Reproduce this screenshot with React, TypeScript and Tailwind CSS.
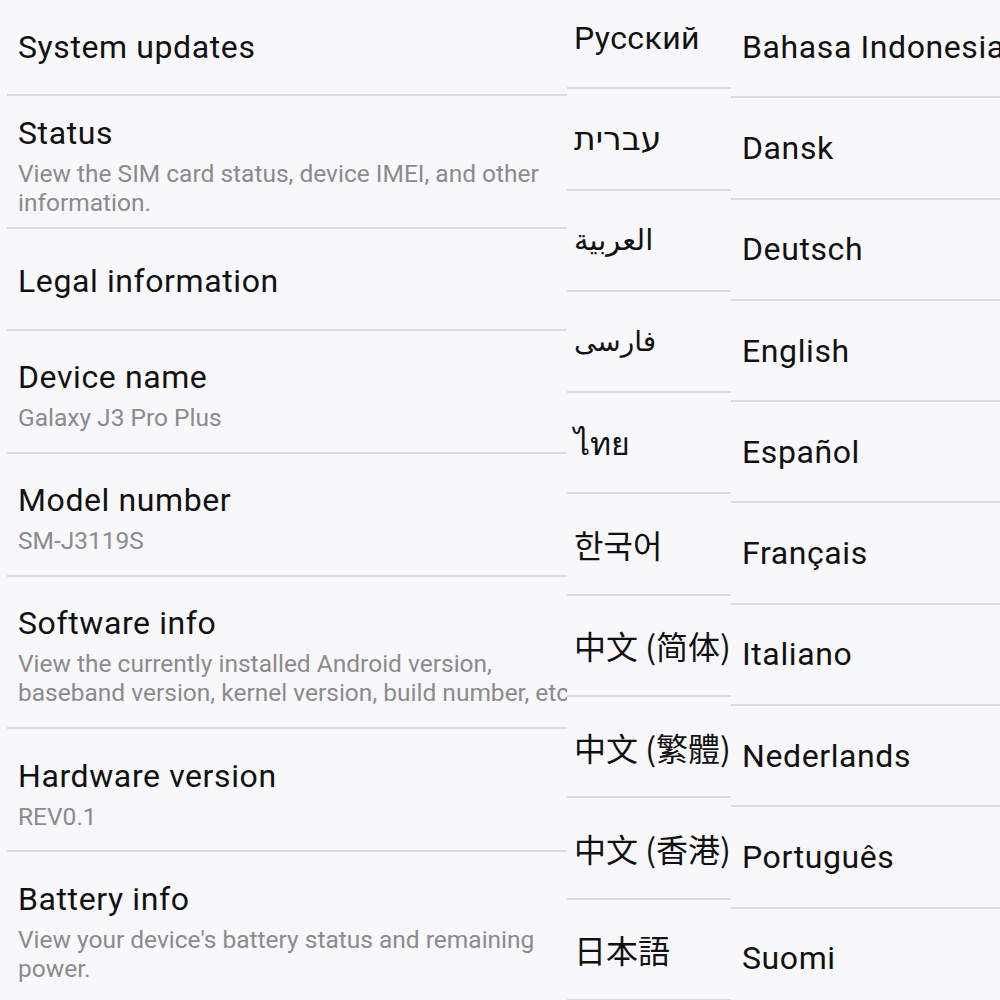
const settings = [
  { title: 'System updates', h: 'h-[96px]', pt: 'justify-center' },
  {
    title: 'Status',
    sub: ['View the SIM card status, device IMEI, and other', 'information.'],
    h: 'h-[133px]',
    pt: 'pt-[17px]',
  },
  { title: 'Legal information', h: 'h-[102px]', pt: 'justify-center pt-[4px]' },
  { title: 'Device name', sub: ['Galaxy J3 Pro Plus'], h: 'h-[123px]', pt: 'pt-[26px]' },
  { title: 'Model number', sub: ['SM-J3119S'], h: 'h-[123px]', pt: 'pt-[26px]' },
  {
    title: 'Software info',
    sub: ['View the currently installed Android version,', 'baseband version, kernel version, build number, etc.'],
    h: 'h-[152px]',
    pt: 'pt-[26px]',
  },
  { title: 'Hardware version', sub: ['REV0.1'], h: 'h-[123px]', pt: 'pt-[27px]' },
  {
    title: 'Battery info',
    sub: ["View your device's battery status and remaining", 'power.'],
    h: 'h-[160px]',
    pt: 'pt-[27px]',
    last: true,
  },
];

const middle = [
  { label: 'Русский', font: 'font-["Roboto",sans-serif] text-[32px] tracking-[0.4px]' },
  { label: 'עברית', font: 'font-["DejaVu_Sans","Noto_Sans",sans-serif] text-[33px]' },
  { label: 'العربية', font: 'font-["DejaVu_Sans","Noto_Sans",sans-serif] text-[29px]' },
  { label: 'فارسی', font: 'font-["DejaVu_Sans","Noto_Sans",sans-serif] text-[28px]' },
  { label: 'ไทย', font: 'font-["Noto_Sans","DejaVu_Sans",sans-serif] text-[32px]' },
  { label: '한국어', font: 'font-["Noto_Sans_CJK_KR",sans-serif] text-[32px]' },
  { label: '中文 (简体)', font: 'font-["Noto_Sans_CJK_SC",sans-serif] text-[32px]' },
  { label: '中文 (繁體)', font: 'font-["Noto_Sans_CJK_TC",sans-serif] text-[32px]' },
  { label: '中文 (香港)', font: 'font-["Noto_Sans_CJK_TC",sans-serif] text-[32px]' },
  { label: '日本語', font: 'font-["Noto_Sans_CJK_JP",sans-serif] text-[32px]' },
];

const right = [
  'Bahasa Indonesia',
  'Dansk',
  'Deutsch',
  'English',
  'Español',
  'Français',
  'Italiano',
  'Nederlands',
  'Português',
  'Suomi',
];

export default function App() {
  return (
    <div className="w-[1000px] h-[1000px] overflow-hidden bg-[#f8f7fa] flex font-['Roboto',sans-serif] text-[#111111]">
      {/* about phone list */}
      <div className="w-[567px] shrink-0 overflow-hidden pl-[7px] flex flex-col">
        {settings.map((s) => (
          <div
            key={s.title}
            className={`${s.h} ${s.pt} shrink-0 flex flex-col pl-[11px] ${s.last ? '' : 'border-b-2 border-[#dcdbde]'}`}
          >
            <div className="text-[32px] tracking-[0.6px] leading-[40px] whitespace-nowrap">{s.title}</div>
            {s.sub && (
              <div className="mt-[6px] text-[24.5px] leading-[29px] text-[#8b8b8d] whitespace-nowrap">
                {s.sub.map((line) => (
                  <div key={line}>{line}</div>
                ))}
              </div>
            )}
          </div>
        ))}
      </div>

      {/* languages, part 1 */}
      <div className="w-[164px] shrink-0 overflow-hidden flex flex-col -mt-[12px]">
        {middle.map((m) => (
          <div
            key={m.label}
            className="h-[101.3px] shrink-0 flex items-center pl-[7px] border-b-2 border-[#dcdbde]"
          >
            <span className={`${m.font} leading-none whitespace-nowrap`}>{m.label}</span>
          </div>
        ))}
      </div>

      {/* languages, part 2 */}
      <div className="flex-1 overflow-hidden flex flex-col -mt-[3px]">
        {right.map((r) => (
          <div
            key={r}
            className="h-[101.3px] shrink-0 flex items-center pl-[11px] border-b-2 border-[#dcdbde]"
          >
            <span className="text-[32px] tracking-[0.6px] leading-none whitespace-nowrap">{r}</span>
          </div>
        ))}
      </div>
    </div>
  );
}
